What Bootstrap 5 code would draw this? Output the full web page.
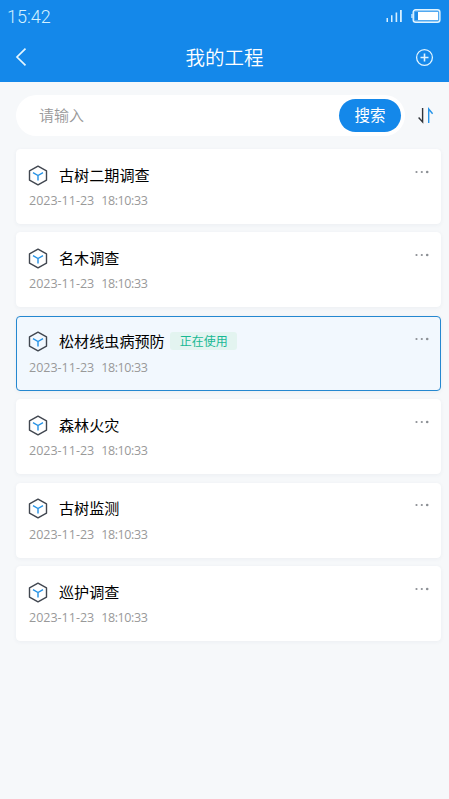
<!DOCTYPE html>
<html lang="zh-CN">
<head>
<meta charset="utf-8">
<meta name="viewport" content="width=device-width, initial-scale=1">
<title>我的工程</title>
<link href="https://cdn.jsdelivr.net/npm/bootstrap@5.3.0/dist/css/bootstrap.min.css" rel="stylesheet">
<style>
body{background:#f6f8fa;font-family:"Noto Sans CJK SC",sans-serif;min-height:799px;overflow:hidden}
svg{display:block;flex:none}
.app-head{background:#1488ea;height:82px;color:#fff}
.status-bar{height:32px;padding:0 8px 0 7px}
.clock{font:300 18px/32px "Roboto","Liberation Sans",sans-serif;color:#d3f1ff;padding-top:1px}
.title-bar{height:50px;padding:0 15px 0 14px}
.page-title{font-size:19.5px;font-weight:350;line-height:46px;padding-bottom:1px}
.search-row{padding:13px 8px 0 16px}
.search-box{width:389px;height:41px;padding:0 4px 0 23px}
.search-box input{font-size:15px;color:#555;line-height:22px;margin-bottom:2px}
.search-box input::placeholder{color:#999;opacity:1;font-weight:350}
.search-btn{width:62px;height:33px;background:#1488ea;color:#fff;font-size:15.500px;line-height:29px;padding:0 0 3px}
.search-btn:hover{background:#0f7dda;color:#fff}
.project-list{padding:13px 8px 0 16px;gap:8.400px}
.project{height:75px;padding:14.600px 12px 0 11px;border:1px solid #fff;border-radius:4px;box-shadow:0 1px 4px rgba(30,60,90,.05)}
.project.in-use{background:#f2f8fe;border-color:#2588d0}
.project-name{font-size:15.100px;line-height:18px;padding-bottom:3px;color:#000;margin-left:11px}
.project-date{font:12.500px/16px "Open Sans","Noto Sans",sans-serif;color:#999;margin:7.500px 0 0 1px}
.project-date span{letter-spacing:-.400px;margin-left:7px}
.use-tag{width:67px;height:18px;margin:-2px 0 0 5px;background:#e3f4f0;color:#18b894;font-size:12px;line-height:17px;border-radius:3px;padding-left:1px}
.more{margin:5.300px -1px 0 0}
</style>
<script src="https://cdn.jsdelivr.net/npm/bootstrap@5.3.0/dist/js/bootstrap.bundle.min.js"></script>
</head>
<body>
<svg width="0" height="0" class="position-absolute" aria-hidden="true">
<symbol id="cube" viewBox="0 0 20 21"><path d="M10 1.200 18.500 5.900v9.300L10 19.900 1.500 15.200V5.900Z" fill="none" stroke="#414750" stroke-width="1.400" stroke-linejoin="round"/><path d="M5 7.700 10 10.500l5-2.800M10 10.500v5" fill="none" stroke="#2391e5" stroke-width="1.400"/></symbol>
<symbol id="dots" viewBox="0 0 14 4"><g fill="#8b8f94"><circle cx="1.500" cy="2" r="1.100"/><circle cx="6.800" cy="2" r="1.100"/><circle cx="12.200" cy="2" r="1.300"/></g></symbol>
</svg>
<header class="app-head">
<div class="status-bar d-flex align-items-center justify-content-between">
<span class="clock">15:42</span>
<div class="d-flex align-items-center gap-2">
<svg width="18" height="14" viewBox="0 0 18 14" fill="#d7efff"><path d="M1.500 9H3v4H1.500zM6 6.300h1.500V13H6zM10.600 3.600h1.600V13h-1.600zM15 1h1.800v12H15z"/></svg>
<svg width="30" height="16" viewBox="0 0 30 16"><rect x="2.200" y="1.700" width="26.700" height="12.600" rx="2.500" fill="#51a9f1" stroke="#e1f4ff" stroke-width="1.400"/><path d="M1 6v4" stroke="#c8e8ff" stroke-width="1.400"/><path d="M4 4h3v8H4z" fill="#1e8be8"/><path d="M7 4h20v8H7z" fill="#fff"/></svg>
</div>
</div>
<div class="title-bar d-flex align-items-center justify-content-between">
<svg width="20" height="20" viewBox="0 0 20 20" fill="none" stroke="#e4f6ff" stroke-width="1.700"><path d="M11.500 1.700 3 10l8.500 8.300"/></svg>
<h1 class="page-title m-0">我的工程</h1>
<svg width="19" height="19" viewBox="0 0 19 19" fill="none" stroke="#e0f4ff" stroke-width="1.300"><circle cx="9.500" cy="9.500" r="7.900"/><path d="M5.500 9.500h8M9.500 5.500v8" stroke-width="1.600"/></svg>
</div>
</header>
<main>
<form class="search-row d-flex align-items-center">
<div class="search-box flex-shrink-0 d-flex align-items-center bg-white rounded-pill">
<input class="form-control border-0 p-0 shadow-none bg-transparent" type="text" placeholder="请输入">
<button class="search-btn btn border-0 rounded-pill flex-shrink-0" type="button">搜索</button>
</div>
<svg class="ms-2" width="24" height="20" viewBox="0 0 24 20" fill="none" stroke-width="1.400"><path d="M9.600 2v14L5.600 11.500" stroke="#30343a"/><path d="M15.700 17V3l3.900 4.800" stroke="#2493e9"/></svg>
</form>
<div class="project-list d-flex flex-column">
<article class="project bg-white d-flex justify-content-between align-items-start"><div><div class="d-flex align-items-center"><svg width="20" height="21"><use href="#cube"/></svg><span class="project-name">古树二期调查</span></div><div class="project-date">2023-11-23<span>18:10:33</span></div></div><svg class="more" width="14" height="4"><use href="#dots"/></svg></article>
<article class="project bg-white d-flex justify-content-between align-items-start"><div><div class="d-flex align-items-center"><svg width="20" height="21"><use href="#cube"/></svg><span class="project-name">名木调查</span></div><div class="project-date">2023-11-23<span>18:10:33</span></div></div><svg class="more" width="14" height="4"><use href="#dots"/></svg></article>
<article class="project in-use d-flex justify-content-between align-items-start"><div><div class="d-flex align-items-center"><svg width="20" height="21"><use href="#cube"/></svg><span class="project-name">松材线虫病预防</span><span class="use-tag text-center">正在使用</span></div><div class="project-date">2023-11-23<span>18:10:33</span></div></div><svg class="more" width="14" height="4"><use href="#dots"/></svg></article>
<article class="project bg-white d-flex justify-content-between align-items-start"><div><div class="d-flex align-items-center"><svg width="20" height="21"><use href="#cube"/></svg><span class="project-name">森林火灾</span></div><div class="project-date">2023-11-23<span>18:10:33</span></div></div><svg class="more" width="14" height="4"><use href="#dots"/></svg></article>
<article class="project bg-white d-flex justify-content-between align-items-start"><div><div class="d-flex align-items-center"><svg width="20" height="21"><use href="#cube"/></svg><span class="project-name">古树监测</span></div><div class="project-date">2023-11-23<span>18:10:33</span></div></div><svg class="more" width="14" height="4"><use href="#dots"/></svg></article>
<article class="project bg-white d-flex justify-content-between align-items-start"><div><div class="d-flex align-items-center"><svg width="20" height="21"><use href="#cube"/></svg><span class="project-name">巡护调查</span></div><div class="project-date">2023-11-23<span>18:10:33</span></div></div><svg class="more" width="14" height="4"><use href="#dots"/></svg></article>
</div>
</main>
</body>
</html>
